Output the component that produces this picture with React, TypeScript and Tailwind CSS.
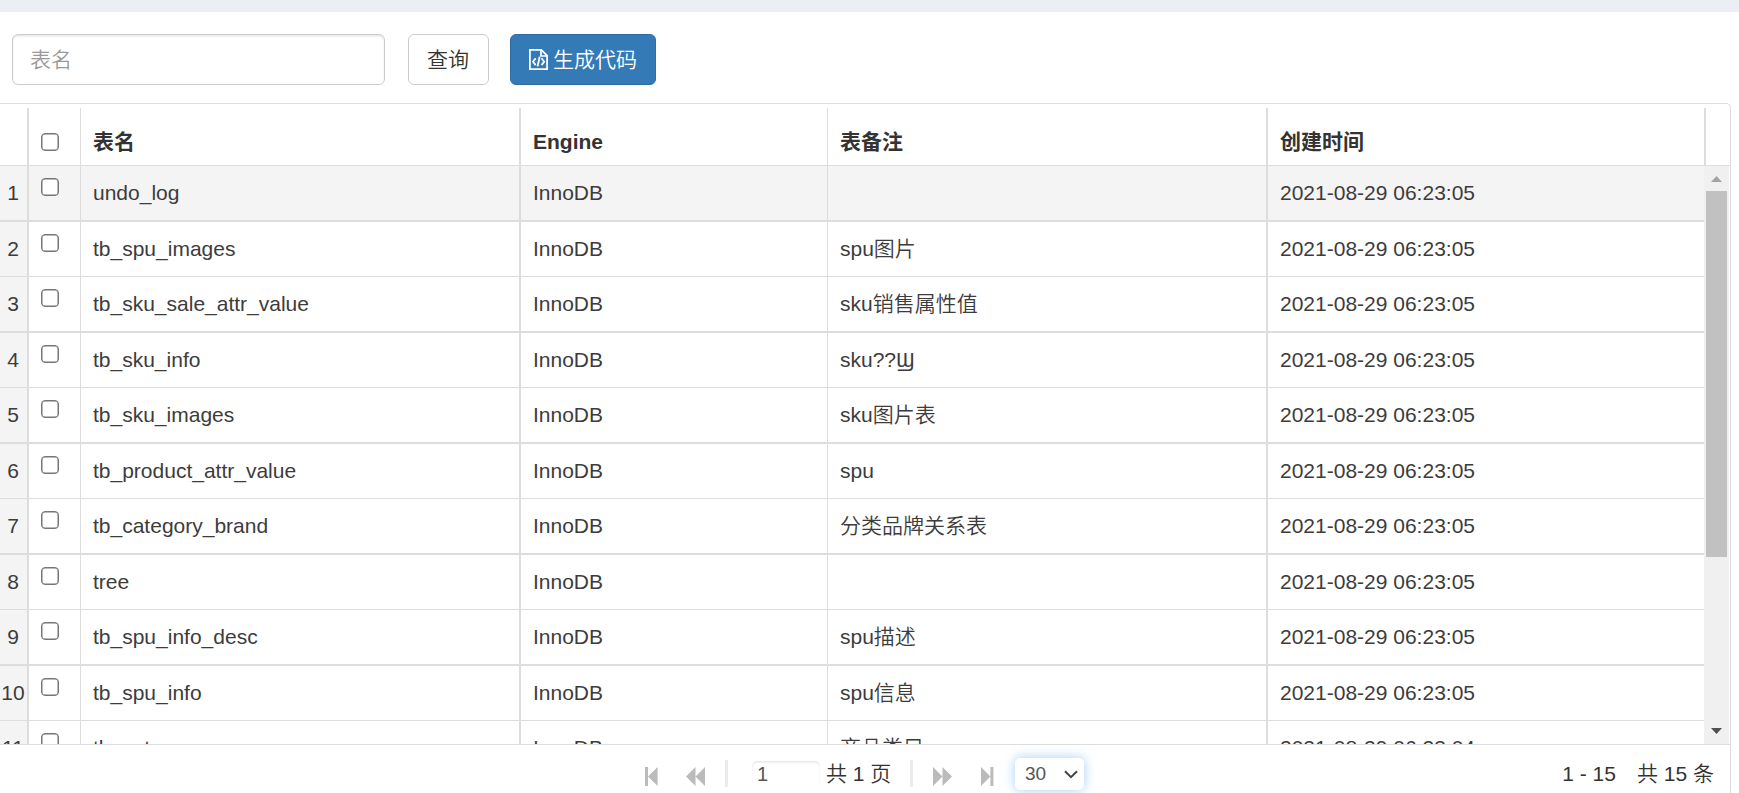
import React from "react";

type Row = { name: string; comment?: React.ReactNode; time?: string };

const rows: Row[] = [
  { name: "undo_log" },
  { name: "tb_spu_images", comment: "spu图片" },
  { name: "tb_sku_sale_attr_value", comment: "sku销售属性值" },
  { name: "tb_sku_info", comment: "sku??Ϣ" },
  { name: "tb_sku_images", comment: "sku图片表" },
  { name: "tb_product_attr_value", comment: "spu" },
  { name: "tb_category_brand", comment: "分类品牌关系表" },
  { name: "tree" },
  { name: "tb_spu_info_desc", comment: "spu描述" },
  { name: "tb_spu_info", comment: "spu信息" },
  { name: "tb_category", comment: "商品类目", time: "2021-08-29 06:23:04" },
];

function Checkbox() {
  return <span className="block size-[18px] shrink-0 rounded-[4px] border border-[#767676] bg-white shadow-[inset_0_0_0_0.5px_#767676]" />;
}

function FileCodeIcon() {
  return (
    <svg className="h-[21px] w-[19px] shrink-0" viewBox="0 0 19 21" fill="none" stroke="currentColor">
      <path strokeWidth="1.8" d="M.9.9h11.4l5.8 5.8v13.4H.9z" />
      <path strokeWidth="1.7" d="M12 1v6h6" />
      <path strokeWidth="1.8" d="M6.7 9.3 4 12.7l2.7 3.4M12.5 9.3l2.7 3.4-2.7 3.4M10.6 7.8 8.6 17.4" />
    </svg>
  );
}

function Header() {
  const cell = "flex h-full items-center border-[#ddd] pl-3 pt-[11px]";
  return (
    <div className="flex h-[58px] shrink-0 border-b border-[#ddd] font-bold">
      <div className="h-full w-[29px] border-r-2 border-[#ddd]" />
      <div className={`${cell} w-[52px] border-r`}><Checkbox /></div>
      <div className={`${cell} w-[440px] border-r-2`}>表名</div>
      <div className={`${cell} w-[307px] border-r`}>Engine</div>
      <div className={`${cell} w-[440px] border-r-2`}>表备注</div>
      <div className={`${cell} w-[438px] border-r-2`}>创建时间</div>
    </div>
  );
}

function GridRow({ row, index }: { row: Row; index: number }) {
  const thick = index % 2 === 0;
  const cell = "flex h-full items-center border-[#ddd] pl-3";
  return (
    <div
      className={`flex shrink-0 border-[#ddd] text-[#3c3c3c] ${thick ? "h-[56px] border-b-2" : "h-[55px] border-b"} ${
        index === 0 ? "bg-[#f4f4f4]" : "bg-white"
      }`}
    >
      <div className="flex h-full w-[29px] items-center justify-center border-r-2 border-[#ddd] bg-[#f4f4f4] pr-px">{index + 1}</div>
      <div className="flex h-full w-[52px] items-start border-r border-[#ddd] pt-3 pl-3"><Checkbox /></div>
      <div className={`${cell} w-[440px] border-r-2`}>{row.name}</div>
      <div className={`${cell} w-[307px] border-r`}>InnoDB</div>
      <div className={`${cell} w-[440px] border-r-2`}>{row.comment}</div>
      <div className={`${cell} w-[436px]`}>{row.time ?? "2021-08-29 06:23:05"}</div>
    </div>
  );
}

function Scrollbar() {
  return (
    <div className="flex h-full w-[25px] shrink-0 flex-col items-center bg-[#f0f0f0]">
      <div className="flex h-[25px] items-center">
        <svg className="h-[6px] w-[11px]" viewBox="0 0 11 6" fill="#a3a3a3"><path d="M0 6 5.5 0 11 6z" /></svg>
      </div>
      <div className="h-[366px] w-[21px] bg-[#c1c1c1]" />
      <div className="mt-auto flex h-[27px] items-center">
        <svg className="h-[6px] w-[11px]" viewBox="0 0 11 6" fill="#505050"><path d="M0 0h11L5.5 6z" /></svg>
      </div>
    </div>
  );
}

function Pager() {
  return (
    <div className="flex h-[48px] shrink-0 items-start border-t border-[#ddd] text-[#333]">
      <svg className="mt-[22px] ml-[645px] h-[19px] w-[13px]" viewBox="0 0 13 19" fill="#bbb"><path d="M0 0h3v19H0zM12.6 0v19L3 9.5z" /></svg>
      <svg className="mt-[22px] ml-[28px] h-[19px] w-[19px]" viewBox="0 0 19 19" fill="#bbb"><path d="M9.5 0v19L0 9.5zM19 0v19L9.5 9.5z" /></svg>
      <div className="mt-[15px] ml-[20px] h-[27px] w-[3px] bg-[#ebebeb]" />
      <div className="mt-[16px] ml-[24px] flex h-[26px] w-[68px] items-center rounded-[5px] pl-[5px] text-[20px] text-[#555] shadow-[inset_0_1.5px_2px_rgba(0,0,0,0.1)]">1</div>
      <div className="mt-[14px] ml-[6px] w-[84px] whitespace-nowrap leading-[30px]">共 1 页</div>
      <div className="mt-[15px] h-[27px] w-[3px] bg-[#ebebeb]" />
      <svg className="mt-[22px] ml-[20px] h-[19px] w-[19px]" viewBox="0 0 19 19" fill="#bbb"><path d="M0 0v19l9.5-9.5zM9.5 0v19L19 9.5z" /></svg>
      <svg className="mt-[22px] ml-[29px] h-[19px] w-[13px]" viewBox="0 0 13 19" fill="#bbb"><path d="M9.4 0h3v19h-3zM0 0v19l9.4-9.5z" /></svg>
      <div className="mt-[13px] ml-[21px] flex h-[32px] w-[69px] items-center justify-between rounded-[5px] bg-white pr-[6px] pl-[10px] text-[19px] text-[#555] shadow-[0_0_12px_rgba(102,175,233,0.6)]">
        30
        <svg className="h-[9px] w-[14px]" viewBox="0 0 14 9" fill="none" stroke="#444" strokeWidth="2"><path d="m1 1.2 6 6 6-6" /></svg>
      </div>
      <div className="mt-[14px] mr-[16px] ml-auto flex gap-[21px] whitespace-nowrap leading-[30px]">
        <span>1 - 15</span>
        <span>共 15 条</span>
      </div>
    </div>
  );
}

export default function App() {
  return (
    <div className="flex h-[793px] w-[1739px] flex-col overflow-hidden bg-white font-['Liberation_Sans','Noto_Sans_CJK_SC',sans-serif] text-[21px] leading-[30px] font-[350] text-[#333]">
      <div className="h-3 shrink-0 bg-[#ebeff5]" />
      <div className="flex h-[91px] shrink-0 items-start pt-[22px] pl-3">
        <div className="flex h-[51px] w-[373px] items-center rounded-[6px] border border-[#ccc] pl-[17px] text-[#999] shadow-[inset_0_1.5px_2px_rgba(0,0,0,0.1)]">表名</div>
        <div className="ml-[23px] flex h-[51px] w-[81px] items-center justify-center rounded-[6px] border border-[#ccc] pr-px">查询</div>
        <div className="ml-[21px] flex h-[51px] w-[146px] items-center gap-[5px] rounded-[6px] border border-[#2e6da4] bg-[#337ab7] pl-[18px] text-white">
          <FileCodeIcon />
          生成代码
        </div>
      </div>
      <div className="flex h-[690px] w-[1731px] shrink-0 flex-col rounded-tr-[5px] border-t border-r border-[#ddd] pt-1">
        <Header />
        <div className="flex h-[578px] shrink-0 overflow-hidden">
          <div className="flex w-[1704px] shrink-0 flex-col">
            {rows.map((row, i) => (
              <GridRow key={row.name} row={row} index={i} />
            ))}
          </div>
          <Scrollbar />
        </div>
        <Pager />
      </div>
    </div>
  );
}
